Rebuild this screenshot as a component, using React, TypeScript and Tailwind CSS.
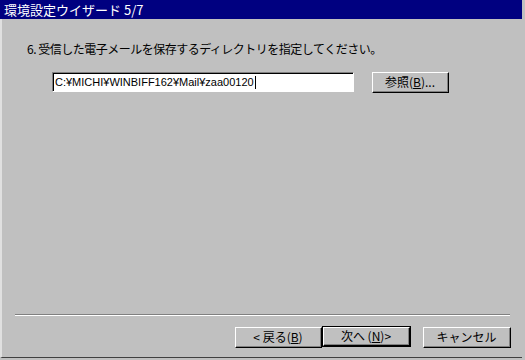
import React from "react";

const jp = { fontFamily: '"Noto Sans CJK JP", "Noto Sans", sans-serif' };

function Btn({ children, w, def = false }: { children: React.ReactNode; w: string; def?: boolean }) {
  const inner = (
    <div className="h-full w-full border-t border-l border-t-white border-l-white border-r border-b border-r-black border-b-black">
      <div className="h-full w-full border-r border-b border-r-[#808080] border-b-[#808080] flex items-center justify-center text-[12px] text-black leading-none whitespace-pre" style={jp}>
        {children}
      </div>
    </div>
  );
  return def ? (
    <div className={`${w} h-[21px] border border-black`}>{inner}</div>
  ) : (
    <div className={`${w} h-[21px]`}>{inner}</div>
  );
}

export default function App() {
  return (
    <div className="w-[525px] h-[360px] bg-[#c0c0c0] flex flex-col overflow-hidden">
      <div className="h-[19px] w-[522px] bg-[#000080] text-white text-[13px] leading-[19px] pl-[4px] shrink-0" style={jp}>
        環境設定ウイザード 5/7
      </div>
      <div className="flex-1 flex flex-col border-l-2 border-l-[#e0e0e0] border-b border-b-[#404040] mb-[2px] mr-[3px]">
        <div className="mt-[22px] ml-[25px] text-[12px] leading-[16px] text-black tracking-[-0.5px]" style={jp}>
          6. 受信した電子メールを保存するディレクトリを指定してください。
        </div>
        <div className="mt-[15px] flex items-start">
          <div className="ml-[50px] w-[302px] h-[20px] border-t border-l border-t-[#808080] border-l-[#808080] border-b border-r border-b-white border-r-white">
            <div className="h-full w-full border-t border-l border-t-black border-l-black bg-white flex items-center pl-[1px]">
              <span className="text-[11px] text-black leading-none" style={{ fontFamily: '"Liberation Sans", Arial, sans-serif' }}>
                C:¥MICHI¥WINBIFF162¥Mail¥zaa00120
              </span>
              <span className="w-[1px] h-[13px] bg-black ml-[1px]" />
            </div>
          </div>
          <div className="ml-[18px]">
            <Btn w="w-[77px]">
              参照(<span className="underline">B</span>)...
            </Btn>
          </div>
        </div>
        <div className="flex-1" />
        <div className="ml-[13px] w-[495px] border-t border-t-[#808080] border-b border-b-white" />
        <div className="mt-[11px] mb-[9px] flex">
          <div className="ml-[233px]">
            <Btn w="w-[87px]">
              {"< 戻る("}<span className="underline">B</span>)
            </Btn>
          </div>
          <div className="-mt-[1px] -mb-[1px]">
            <div className="h-[23px]">
              <Btn w="w-[89px]" def>
                {"次へ ("}<span className="underline">N</span>)&gt;
              </Btn>
            </div>
          </div>
          <div className="ml-[12px]">
            <Btn w="w-[88px]">キャンセル</Btn>
          </div>
        </div>
      </div>
    </div>
  );
}
